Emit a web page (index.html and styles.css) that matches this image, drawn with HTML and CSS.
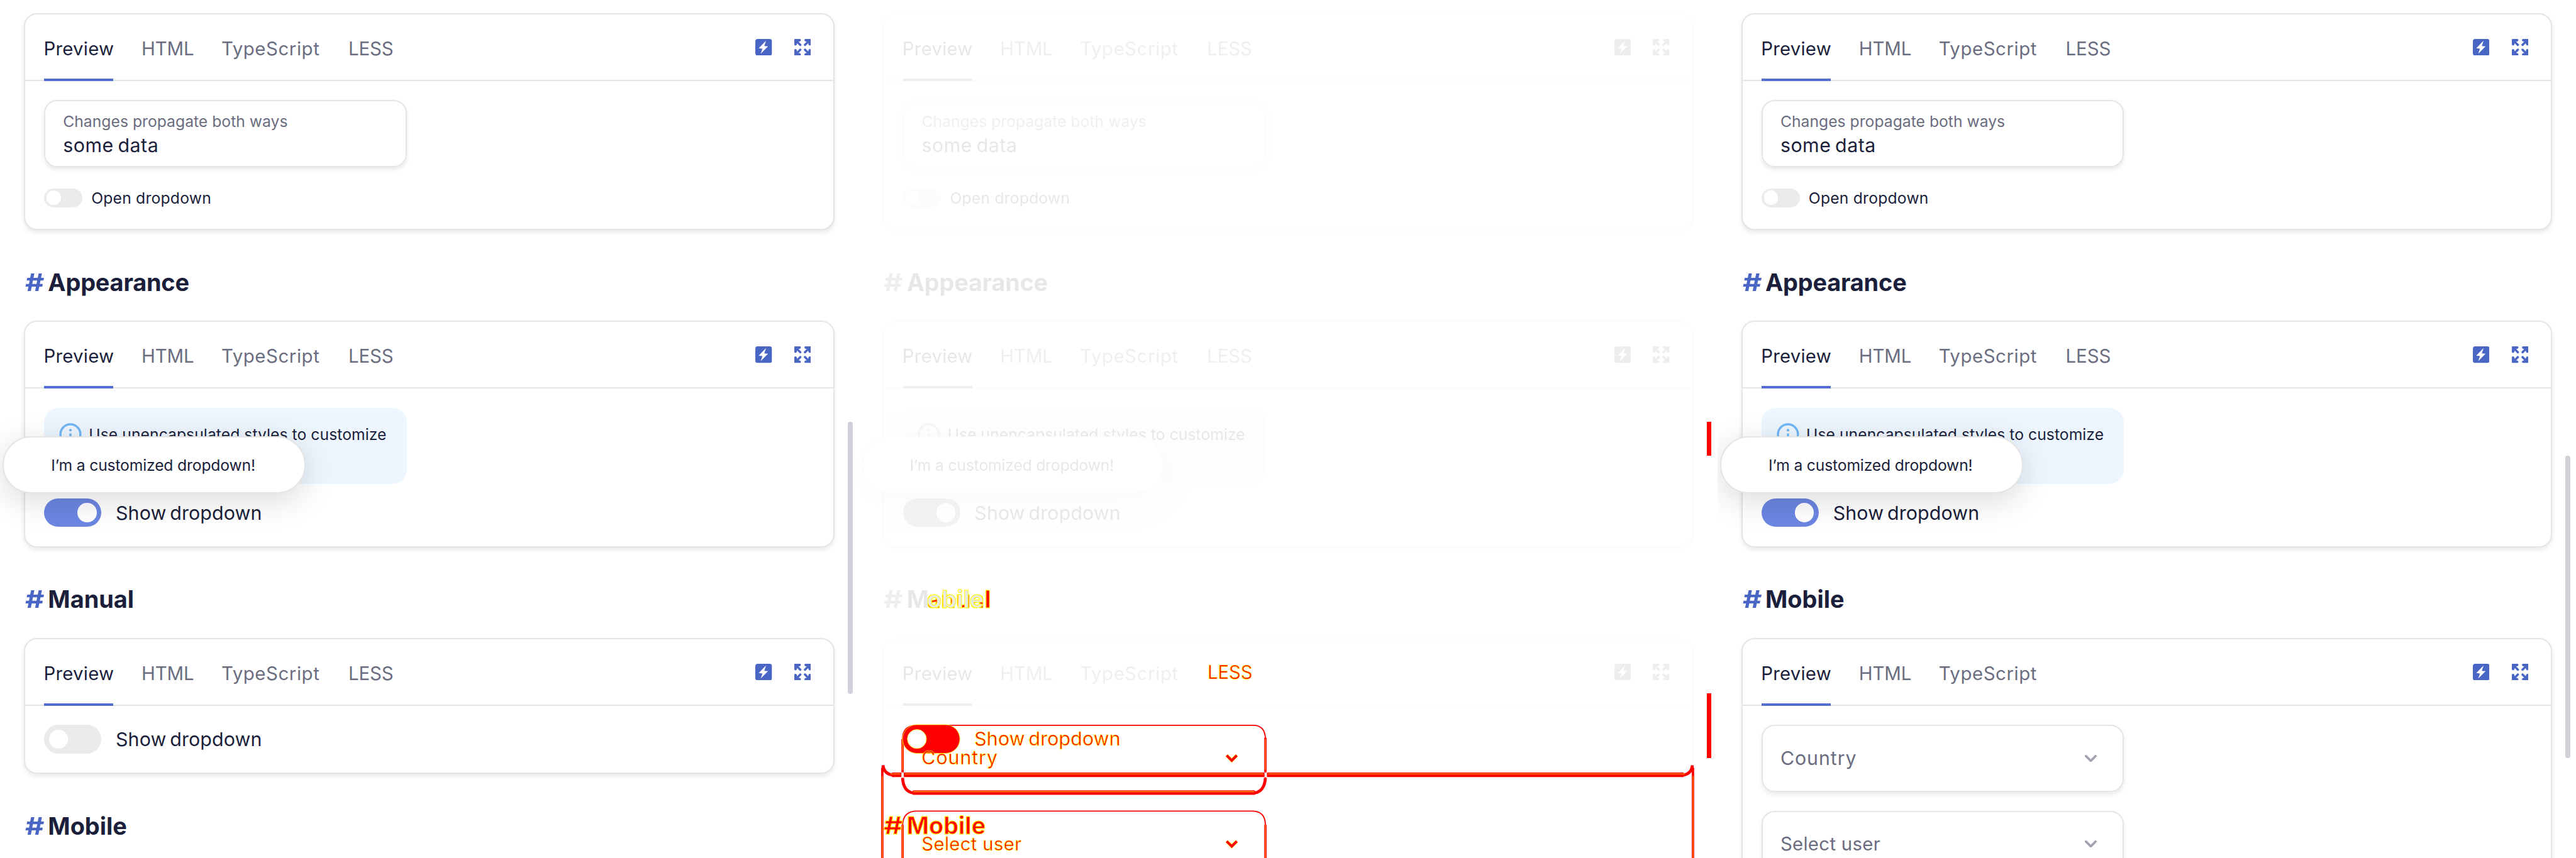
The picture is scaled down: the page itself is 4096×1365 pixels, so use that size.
FILE: index.html
```html
<!DOCTYPE html>
<html lang="en">
<head>
<meta charset="utf-8">
<title>Dropdown visual diff</title>
<link rel="stylesheet" href="styles.css">
</head>
<body>
<svg class="sprite" aria-hidden="true">
  <symbol id="bolt" viewBox="0 0 28 28"><path fill-rule="evenodd" d="M4 0H24Q28 0 28 4V24Q28 28 24 28H4Q0 28 0 24V4Q0 0 4 0ZM18 3L5.7 15.5L12 16.3L9 24.8L21.3 12.5L15 11.8Z"/></symbol>
  <symbol id="expand" viewBox="0 0 28 28">
    <g id="arrow"><path d="M1 0H9.6Q11 .2 11 1.9Q11 3.4 9.8 4L7.2 4.6L11.6 8.8Q12.4 10 11.6 11.2Q10.4 12.4 9 11.6L4.8 7.2L4 9.8Q3.4 11 2 11Q.2 11 0 9.6V1Q0 0 1 0Z"/></g>
    <use href="#arrow" transform="translate(28 0) scale(-1 1)"/>
    <use href="#arrow" transform="translate(0 28) scale(1 -1)"/>
    <use href="#arrow" transform="translate(28 28) scale(-1 -1)"/>
  </symbol>
  <symbol id="info" viewBox="0 0 40 40"><circle cx="20" cy="20" r="16.8" fill="none" stroke="currentColor" stroke-width="3.6"/><circle cx="20" cy="13" r="2.2"/><path d="M18.2 18.5H21.8V28.5H18.2Z"/></symbol>
  <symbol id="chevron" viewBox="0 0 20 12"><path d="M2 2L10 10L18 2" fill="none" stroke="currentColor" stroke-width="4" stroke-linecap="round" stroke-linejoin="round"/></symbol>
</svg>
<main class="page">

  <section class="panel">
    <article class="card">
      <header class="bar">
        <nav class="tabs"><span class="tab preview active">Preview</span><span class="tab html">HTML</span><span class="tab ts">TypeScript</span><span class="tab less">LESS</span></nav>
        <svg class="icon"><use href="#bolt"/></svg><svg class="icon"><use href="#expand"/></svg>
      </header>
      <div class="body">
        <div class="field"><span class="hint">Changes propagate both ways</span><span class="value">some data</span></div>
        <div class="row small"><span class="switch"></span><span class="open">Open dropdown</span></div>
      </div>
    </article>
    <h2><span class="hash">#</span><span class="wide">Appearance</span></h2>
    <article class="card">
      <header class="bar">
        <nav class="tabs"><span class="tab preview active">Preview</span><span class="tab html">HTML</span><span class="tab ts">TypeScript</span><span class="tab less">LESS</span></nav>
        <svg class="icon"><use href="#bolt"/></svg><svg class="icon"><use href="#expand"/></svg>
      </header>
      <div class="body">
        <div class="note"><svg class="info"><use href="#info"/></svg><span>Use unencapsulated styles to customize</span></div>
        <div class="row"><span class="switch on"></span><span class="show">Show dropdown</span></div>
      </div>
      <div class="dropdown">I’m a customized dropdown!</div>
    </article>
    <h2><span class="hash">#</span><span>Manual</span></h2>
    <article class="card">
      <header class="bar">
        <nav class="tabs"><span class="tab preview active">Preview</span><span class="tab html">HTML</span><span class="tab ts">TypeScript</span><span class="tab less">LESS</span></nav>
        <svg class="icon"><use href="#bolt"/></svg><svg class="icon"><use href="#expand"/></svg>
      </header>
      <div class="body">
        <div class="row first"><span class="switch"></span><span class="show">Show dropdown</span></div>
      </div>
    </article>
    <h2><span class="hash">#</span><span>Mobile</span></h2>
    <i class="thumb before"></i>
  </section>

  <section class="panel">
    <div class="faded">
      <article class="card">
        <header class="bar">
          <nav class="tabs"><span class="tab preview active">Preview</span><span class="tab html">HTML</span><span class="tab ts">TypeScript</span><span class="tab less">LESS</span></nav>
          <svg class="icon"><use href="#bolt"/></svg><svg class="icon"><use href="#expand"/></svg>
        </header>
        <div class="body">
          <div class="field"><span class="hint">Changes propagate both ways</span><span class="value">some data</span></div>
          <div class="row small"><span class="switch"></span><span class="open">Open dropdown</span></div>
        </div>
      </article>
      <h2><span class="hash">#</span><span class="wide">Appearance</span></h2>
      <article class="card">
        <header class="bar">
          <nav class="tabs"><span class="tab preview active">Preview</span><span class="tab html">HTML</span><span class="tab ts">TypeScript</span><span class="tab less">LESS</span></nav>
          <svg class="icon"><use href="#bolt"/></svg><svg class="icon"><use href="#expand"/></svg>
        </header>
        <div class="body">
          <div class="note"><svg class="info"><use href="#info"/></svg><span>Use unencapsulated styles to customize</span></div>
          <div class="row"><span class="switch on"></span><span class="show">Show dropdown</span></div>
        </div>
        <div class="dropdown">I’m a customized dropdown!</div>
      </article>
      <h2><span class="hash">#</span><span>M</span></h2>
      <article class="card tall">
        <header class="bar">
          <nav class="tabs"><span class="tab preview active">Preview</span><span class="tab html">HTML</span><span class="tab ts">TypeScript</span></nav>
          <svg class="icon"><use href="#bolt"/></svg><svg class="icon"><use href="#expand"/></svg>
        </header>
      </article>
      <i class="thumb shared"></i>
    </div>
    <div class="diff">
      <svg class="marks" viewBox="0 0 1440 1440">
        <g fill="none" stroke="#f00">
          <path stroke-width="2" d="M95 1217H662Q682 1217 682.5 1240V1296M682.5 1304V1310"/>
          <path stroke-width="4" d="M74 1240V1296M40 1288V1440M1399.5 1288V1440"/>
          <path stroke-width="2" d="M74 1240Q74 1217 98 1217M74 1440V1384Q75 1361 98 1361H662Q682 1362 682.5 1384V1440"/>
          <path stroke-width="4" d="M682.5 1238V1296M682.5 1384V1440M74 1384V1440"/>
          <path stroke-width="7.5" d="M56 1300H72M76 1300H681M685 1300H1384M91 1330H665"/>
          <path stroke-width="5" d="M41 1284Q43 1299 58 1300.5M1398.5 1284Q1397 1299 1382 1300.5M74 1305Q75 1328 92 1330.5M682.5 1305Q681 1328 664 1330.5"/>
        </g>
        <path fill="none" stroke="#ff0" stroke-width=".8" d="M54 1298.5H70M78 1298.5H679M687 1298.5H1386M92 1328.5H664M40 1302V1440M1399.5 1302V1440M74 1240V1292M74 1384V1440M682.5 1240V1292M682.5 1384V1440"/>
        <path fill="#f00" fill-rule="evenodd" stroke="#ff0" stroke-width=".8" d="M98 1216H146A24 24 0 0 1 146 1264H98A24 24 0 0 1 98 1216ZM98 1224A16 16 0 0 0 98 1256A16 16 0 0 0 98 1224Z"/>
        <path fill="none" stroke="#ff0" stroke-width="5.4" d="M617.5 1267.5L626 1276L634.500 1267.500M617.5 1411.500L626 1420L634.500 1411.500"/>
        <path fill="none" stroke="#f00" stroke-width="4.2" d="M617.5 1267.5L626 1276L634.500 1267.500M617.5 1411.500L626 1420L634.500 1411.500"/>
      </svg>
      <span class="mark at-less less">LESS</span>
      <span class="mark at-show show">Show dropdown</span>
      <span class="mark at-country country">Country</span>
      <span class="mark at-user user">Select user</span>
      <span class="mark bold at-old">anual</span>
      <span class="mark bold at-new">obile</span>
      <h2 class="mark bold at-mobile"><span class="hash">#</span><span>Mobile</span></h2>
      <i class="thumb removed"></i><i class="thumb added"></i>
    </div>
  </section>

  <section class="panel">
    <article class="card">
      <header class="bar">
        <nav class="tabs"><span class="tab preview active">Preview</span><span class="tab html">HTML</span><span class="tab ts">TypeScript</span><span class="tab less">LESS</span></nav>
        <svg class="icon"><use href="#bolt"/></svg><svg class="icon"><use href="#expand"/></svg>
      </header>
      <div class="body">
        <div class="field"><span class="hint">Changes propagate both ways</span><span class="value">some data</span></div>
        <div class="row small"><span class="switch"></span><span class="open">Open dropdown</span></div>
      </div>
    </article>
    <h2><span class="hash">#</span><span class="wide">Appearance</span></h2>
    <article class="card">
      <header class="bar">
        <nav class="tabs"><span class="tab preview active">Preview</span><span class="tab html">HTML</span><span class="tab ts">TypeScript</span><span class="tab less">LESS</span></nav>
        <svg class="icon"><use href="#bolt"/></svg><svg class="icon"><use href="#expand"/></svg>
      </header>
      <div class="body">
        <div class="note"><svg class="info"><use href="#info"/></svg><span>Use unencapsulated styles to customize</span></div>
        <div class="row"><span class="switch on"></span><span class="show">Show dropdown</span></div>
      </div>
      <div class="dropdown">I’m a customized dropdown!</div>
    </article>
    <h2><span class="hash">#</span><span>Mobile</span></h2>
    <article class="card tall">
      <header class="bar">
        <nav class="tabs"><span class="tab preview active">Preview</span><span class="tab html">HTML</span><span class="tab ts">TypeScript</span></nav>
        <svg class="icon"><use href="#bolt"/></svg><svg class="icon"><use href="#expand"/></svg>
      </header>
      <div class="body">
        <div class="field select"><span class="country">Country</span><svg class="chevron"><use href="#chevron"/></svg></div>
        <div class="field select"><span class="user">Select user</span><svg class="chevron"><use href="#chevron"/></svg></div>
      </div>
    </article>
    <i class="thumb after"></i>
  </section>

</main>
</body>
</html>
```
FILE: styles.css
```css
/* 1rem = 10 design pixels */
html { font-size: 9.48148px; }
* { box-sizing: border-box; }
body { margin: 0; background: #fff; overflow: hidden; font-family: Inter, "Liberation Sans", sans-serif; color: #1b1f3b; }
.sprite { position: absolute; width: 0; height: 0; }
.page { display: flex; width: 432rem; height: 144rem; overflow: hidden; }
.panel { position: relative; flex: none; width: 144rem; height: 144rem; padding: 2.2rem 4rem 0; overflow: hidden; }
.faded { filter: grayscale(1); opacity: .1; }

.card { position: relative; border: 2px solid #e5e5e5; border-radius: 2.2rem; background: #fff; box-shadow: 0 .4rem .8rem rgba(0,0,0,.09); }
.card.tall { height: 60rem; }
.bar { display: flex; align-items: center; gap: 3.7rem; height: 11.2rem; padding: 0 3.8rem 0 3.2rem; border-bottom: 2px solid #e5e5e5; }
.tabs { display: flex; gap: 4.8rem; height: 100%; margin-right: auto; }
.tab { position: relative; padding-top: .3rem; font-size: 3.1rem; line-height: 11rem; white-space: nowrap; text-indent: -.08rem; color: #6b6d80; }
.tab.active { color: #1b1f3b; }
.tab.active::after { content: ""; position: absolute; left: 0; right: 0; bottom: -2px; height: 4px; background: #526ed3; }
.preview { width: 11.6rem; letter-spacing: .025rem; }
.html { width: 8.6rem; letter-spacing: -.01rem; }
.ts { width: 16.5rem; letter-spacing: .06rem; }
.less { width: 7.6rem; letter-spacing: -.01rem; }
.icon { flex: none; width: 2.8rem; height: 2.8rem; fill: #4a66c5; }

.body { padding: 3.2rem; }
.field { width: 60.8rem; height: 11.2rem; padding: 1.45rem 2.95rem 0; border: 2px solid #e5e5e5; border-radius: 2.2rem; box-shadow: 0 .4rem .8rem rgba(0,0,0,.09); }
.hint, .value { display: block; line-height: 4rem; white-space: nowrap; }
.hint { font-size: 2.6rem; letter-spacing: .004rem; color: #6b6d80; }
.value { font-size: 3.2rem; letter-spacing: .055rem; word-spacing: -.25rem; }
.select { display: flex; align-items: center; justify-content: space-between; padding: 0 4.4rem 0 2.95rem; margin-bottom: 3.2rem; font-size: 3.1rem; color: #6b6d80; }
.chevron { width: 2rem; height: 1.2rem; color: #a3a3b1; }

.row { display: flex; align-items: center; height: 4.8rem; margin-top: 2.4rem; gap: 2.4rem; white-space: nowrap; }
.row.first { margin-top: 0; }
.row.small { height: 4rem; margin-top: 3.2rem; gap: 1.5rem; }
.switch { display: flex; align-items: center; width: 9.6rem; height: 4.8rem; padding: 0 .8rem; border-radius: 2.4rem; background: #ebebeb; }
.switch::before { content: ""; width: 3.2rem; height: 3.2rem; border-radius: 50%; background: #fff; }
.switch.on { justify-content: flex-end; background: #6c86e2; }
.small .switch { width: 6.4rem; height: 3.2rem; padding: 0 .4rem; }
.small .switch::before { width: 2.4rem; height: 2.4rem; }
.open { font-size: 2.6rem; letter-spacing: .025rem; }
.show { font-size: 3.2rem; letter-spacing: .015rem; word-spacing: -.3rem; }
.country { font-size: 3.2rem; letter-spacing: .1rem; }
.user { font-size: 3.1rem; letter-spacing: .032rem; }

.note { display: flex; gap: 1.1rem; width: 60.8rem; height: 12.8rem; padding: 2.4rem; border-radius: 2.4rem; background: #edf6ff; font-size: 2.6rem; line-height: 4.1rem; letter-spacing: .008rem; white-space: nowrap; }
.info { flex: none; width: 4rem; height: 4rem; color: #70b6f6; fill: #70b6f6; }
.dropdown { position: absolute; left: -3.75rem; top: 19.2rem; width: 50.8rem; height: 9.6rem; padding-left: 7.9rem; border: 2px solid #e5e5e5; border-radius: 4.8rem; background: #fff; box-shadow: 0 1.2rem 5.4rem rgba(0,0,0,.15); font-size: 2.6rem; line-height: 9.3rem; letter-spacing: -.015rem; white-space: nowrap; }

h2 { display: flex; height: 15.2rem; margin: 0; padding-top: 6.4rem; font-size: 4rem; line-height: 4.8rem; font-weight: 700; white-space: nowrap; }
.hash { width: 4.05rem; padding-left: .16rem; transform: scaleX(1.24); transform-origin: left; color: #4a66c5; }
.wide { letter-spacing: -.02rem; }

.thumb { position: absolute; left: 142.2rem; width: .8rem; background: #d0d1d8; }
.before { top: 70.8rem; height: 45.6rem; border-radius: .4rem; }
.after { top: 76.5rem; height: 50.7rem; border-radius: .4rem; }
.shared { top: 76.5rem; height: 39.8rem; }
.removed { top: 70.8rem; height: 5.7rem; background: #f00; }
.added { top: 116.3rem; height: 10.9rem; background: #f00; }

/* Changed pixels drawn over the faded page */
.diff { position: absolute; inset: 0; }
.marks { position: absolute; inset: 0; width: 144rem; height: 144rem; }
.mark { position: absolute; width: auto; height: auto; padding: 0; color: #f00; -webkit-text-stroke: .7px #ff0; line-height: 4.8rem; white-space: nowrap; }
.mark .hash { color: #f00; }
.bold { font-size: 4rem; font-weight: 700; -webkit-text-stroke-width: 1px; }
.at-less { left: 58.5rem; top: 110.45rem; font-size: 3.1rem; }
.at-show { left: 19.4rem; top: 121.65rem; }
.at-country { left: 10.55rem; top: 124.8rem; }
.at-user { left: 10.55rem; top: 139.2rem; }
.at-old { left: 11.5rem; top: 98.2rem; }
.at-new { left: 11.5rem; top: 98.2rem; color: #e8e8e8; }
.at-mobile { left: 4rem; top: 136.2rem; }
```
